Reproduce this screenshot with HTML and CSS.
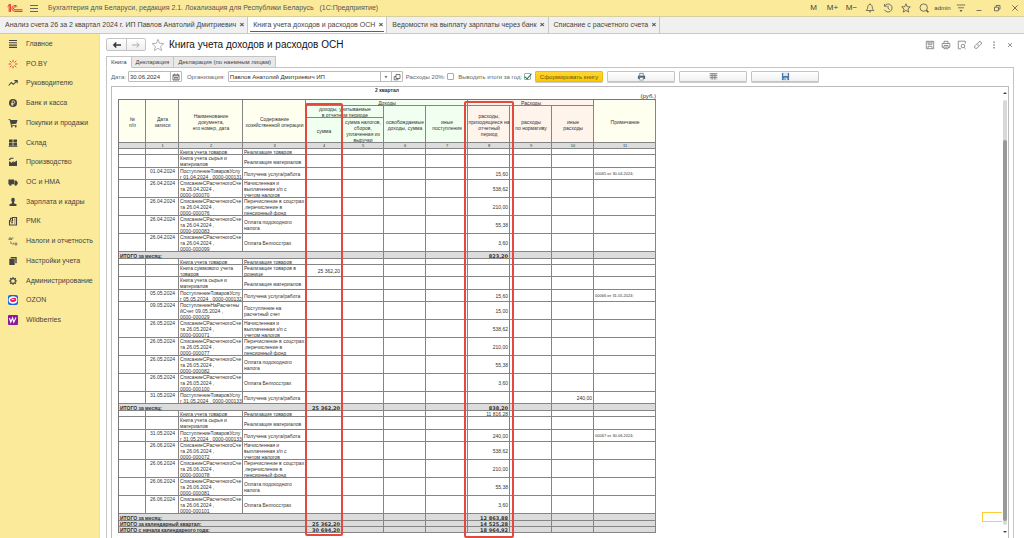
FILE: index.html
```html
<!DOCTYPE html>
<html lang="ru">
<head>
<meta charset="utf-8">
<meta name="viewport" content="width=device-width, initial-scale=1">
<title>Книга учета доходов и расходов ОСН</title>
<link rel="stylesheet" href="styles.css">
</head>
<body>
<header class="titlebar">
  <svg class="logo" viewBox="0 0 16 9" aria-label="1C"><g fill="none" stroke="#e0352b" stroke-width="1"><path d="M.5 2.8 2.2 1.2V8M3.6 8V.6L1.6.6"/><path d="M10.4 2.6A3 3 0 1 0 7.8 7.4H15.5"/><path d="M9.2 3.3A1.5 1.5 0 1 0 7.9 5.8H15.5"/></g></svg>
  <button class="burger" aria-label="Меню"><svg viewBox="0 0 8 8"><path d="M0 1.5h8M0 4.5h8M0 7.5h8" stroke="#666" fill="none"/></svg></button>
  <span class="app-name">Бухгалтерия для Беларуси, редакция 2.1. Локализация для Республики Беларусь &nbsp; (1С:Предприятие)</span>
  <div class="window-tools">
    <button class="word">M</button><button class="word">M+</button><button class="word">M−</button>
    <button aria-label="Уведомления"><svg viewBox="0 0 10 10"><path d="M1.2 7.5h7.6L7.5 5.8C7.3 3 6.8 1.5 5 1.5S2.7 3 2.5 5.8zM4 8.8h2M5 .5v1"/></svg></button>
    <button aria-label="История"><svg viewBox="0 0 10 10"><path d="M1.6 3A4 4 0 1 1 1.5 6.8M1.5 1v2.3h2.3M5 2.8V5.2L6.7 6.6"/></svg></button>
    <button aria-label="Избранное"><svg viewBox="0 0 10 10"><path d="m5 .8 1.2 2.9 3.1.2L6.9 6l.8 3.1L5 7.4 2.3 9.1 3.1 6 .7 3.9l3.1-.2z"/></svg></button>
    <button aria-label="Поиск"><svg viewBox="0 0 10 10"><circle cx="4.7" cy="4.6" r="3.7"/><path d="m7.4 7.3 2 2" stroke-width="1.5"/></svg></button>
    <button class="word user">admin</button>
    <button aria-label="Настройки"><svg viewBox="0 0 10 10"><path d="M.8 2h8.4M2 4.8h6"/><path d="M3.5 7h3L5 9z" fill="#555" stroke="none"/></svg></button>
    <button aria-label="Свернуть"><svg viewBox="0 0 10 10"><path d="M2.5 7.5h5"/></svg></button>
    <button aria-label="Восстановить"><svg viewBox="0 0 10 10"><path d="M2.5 4.2h4v3.6h-4zM4 4V2.5h4v3.6H6.8"/></svg></button>
    <button aria-label="Закрыть"><svg viewBox="0 0 10 10"><path d="m2.3 2.3 5.4 5.4M7.7 2.3 2.3 7.7"/></svg></button>
  </div>
</header>
<nav class="doc-tabs">
  <div class="doc-tab"><a href="#">Анализ счета 26 за 2 квартал 2024 г. ИП Павлов Анатолий Дмитриевич</a><button aria-label="Закрыть">×</button></div>
  <div class="doc-tab active"><a href="#">Книга учета доходов и расходов ОСН</a><button aria-label="Закрыть">×</button></div>
  <div class="doc-tab"><a href="#">Ведомости на выплату зарплаты через банк</a><button aria-label="Закрыть">×</button></div>
  <div class="doc-tab"><a href="#">Списание с расчетного счета</a><button aria-label="Закрыть">×</button></div>
</nav>
<div class="workspace">
  <nav class="sidebar">
    <ul>
      <li><a href="#"><svg viewBox="0 0 10 10"><path class="line" d="M1 1.5h8M1 3.8h8M1 6.1h8M1 8.4h8"/></svg>Главное</a></li>
      <li><a href="#"><svg viewBox="0 0 10 10"><g stroke="#e0483c" stroke-width="1" fill="none"><path d="M5 .8v2.4M5 7v2.4M.6 5h2.5M7 5h2.5M1.7 1.8l1.8 1.7M8.3 1.8 6.6 3.5M1.7 8.3l1.8-1.8M8.3 8.3 6.6 6.5"/></g></svg>PO.BY</a></li>
      <li><a href="#"><svg viewBox="0 0 10 10"><path class="line" d="m.7 7.5 2.6-3 2 1.8L9 2.8M6.3 2.6h2.9v2.7"/></svg>Руководителю</a></li>
      <li><a href="#"><svg viewBox="0 0 10 10"><circle cx="5" cy="5" r="4"/><path d="M4.2 8V2.9h1.3a1.2 1.2 0 0 1 0 2.6H3.1M3.1 6.7h2.5" fill="none" stroke="#fbea9a" stroke-width=".8"/></svg>Банк и касса</a></li>
      <li><a href="#"><svg viewBox="0 0 10 10"><path d="M.5 1h1.7l.4 1h6.9L8.4 5.8 3.5 6.2l.2.7h4.8v.8H3L1.6 1.8H.5z"/><circle cx="3.8" cy="8.6" r=".9"/><circle cx="7.7" cy="8.6" r=".9"/></svg>Покупки и продажи</a></li>
      <li><a href="#"><svg viewBox="0 0 10 10"><path d="M1 1.5h3.6v3H1zM5.4 1.5H9v3H5.4zM1 5.1h3.6v2.3H1zM5.4 5.1H9v2.3H5.4zM.6 7.8h8.8v.9H.6z"/></svg>Склад</a></li>
      <li><a href="#"><svg viewBox="0 0 10 10"><path d="M1 9V4.5h1.5L3 6l2.7-2v1.6L9 3.5V9z"/><path class="line" d="M1.5 3.2C1 1.5 3 2.2 3 1.3h2.5"/></svg>Производство</a></li>
      <li><a href="#"><svg viewBox="0 0 10 10"><path d="M.4 2.5H6v4.8H.4zM6.4 3.6h1.9l1.4 1.7v2H6.4z"/><circle cx="2.4" cy="7.5" r="1.2"/><circle cx="7.7" cy="7.5" r="1.2"/></svg>ОС и НМА</a></li>
      <li><a href="#"><svg viewBox="0 0 10 10"><ellipse cx="5" cy="3" rx="1.8" ry="2.2"/><path d="M1.5 9V7.3L4 6.2V5h2v1.2l2.5 1.1V9z"/></svg>Зарплата и кадры</a></li>
      <li><a href="#"><svg viewBox="0 0 10 10"><path class="line" d="M1.5 4v5h7V1.5h-4V5H1.5M3 6.800h2M6.300 3.200h1M6.300 5h1M6.300 7h1M2.500 4V2.200h2"/></svg>РМК</a></li>
      <li><a href="#"><svg viewBox="0 0 10 10"><path class="line thin" d="M1 4V2.800L2 1.300l1 1.500V4M1 3.200h2M3.700 4V2h1.800M5 9V7.200h1.500M7.200 9V7h1.600v2zM2.800 5.400v2h1.200"/></svg>Налоги и отчетность</a></li>
      <li><a href="#"><svg viewBox="0 0 10 10"><path d="M1.300 2.800h5.400V9H1.300zM2.700 1h6v6.200H7.300V2.200H2.700z"/></svg>Настройки учета</a></li>
      <li><a href="#"><svg viewBox="0 0 10 10"><circle cx="5" cy="5" r="2.400" fill="none" stroke="#444" stroke-width="1.100"/><path class="line" d="M5 .9v1.500M5 7.600v1.500M.9 5h1.500M7.600 5h1.500M2.100 2.100l1 1M6.900 6.900l1 1M7.900 2.100l-1 1M3.100 6.900l-1 1"/></svg>Администрирование</a></li>
      <li><a href="#"><svg viewBox="0 0 10 10"><rect width="10" height="10" rx="2" fill="#1565e8"/><ellipse cx="5" cy="5" rx="4.400" ry="3.700" fill="#fff"/><ellipse cx="5.200" cy="5" rx="3.200" ry="2" fill="#f21858" transform="rotate(-12 5 5)"/><ellipse cx="5" cy="4.500" rx="1.500" ry=".6" fill="#fff"/></svg>OZON</a></li>
      <li><a href="#"><svg viewBox="0 0 10 10"><rect width="10" height="10" rx="1" fill="#8b1b9c"/><path d="m1.500 3 1.300 4.200L4.600 3l1.200 4.200L8 2.600" fill="none" stroke="#fff" stroke-width="1.100"/></svg>Wildberries</a></li>
    </ul>
  </nav>
  <main class="page">
    <div class="page-head">
      <div class="history"><button aria-label="Назад"><svg viewBox="0 0 10 8"><path d="M9 4H2M4.3 1.5 1.8 4l2.5 2.5" fill="none" stroke="#333" stroke-width="1.4"/></svg></button><button aria-label="Вперед"><svg viewBox="0 0 10 8"><path d="M1 4h7M5.7 1.5 8.2 4 5.7 6.5" fill="none" stroke="#aaa"/></svg></button></div>
      <button class="star" aria-label="В избранное"><svg viewBox="0 0 14 14"><path d="m7 1.3 1.6 4 4.3.3-3.3 2.8 1 4.2L7 10.3l-3.6 2.3 1-4.2L1.1 5.6l4.3-.3z" fill="none" stroke="#aaa" stroke-width=".9"/></svg></button>
      <h1>Книга учета доходов и расходов ОСН</h1>
      <div class="page-tools">
        <button aria-label="Сохранить"><svg viewBox="0 0 10 10"><path d="M1.3 1.3h7.4v7.4H1.3zM3 1.3v3h4v-3M3 8.5V6.3h4v2.2M3.5 2.8h3"/></svg></button>
        <button aria-label="Печать"><svg viewBox="0 0 10 10"><path d="M3 3.5V1.3h4v2.2M3 7.3H1.2V3.5h7.6v3.8H7M3 5.5h4v3.2H3zM4 7.2h2"/></svg></button>
        <button aria-label="Предпросмотр"><svg viewBox="0 0 10 10"><path d="M4 8.8H1.3V1.2h7v2.3M8.5 8.8 7.2 7.6"/><circle cx="6" cy="6" r="1.8"/></svg></button>
        <button aria-label="Ссылка"><svg viewBox="0 0 10 10"><path d="M4.3 3.5 6 1.8c1.4-1 3.4.8 2.2 2.3L6.5 5.8C5.8 6.3 5 6.2 4.4 5.6M5.7 6.5 4 8.2C2.6 9.2.6 7.4 1.8 5.9L3.5 4.2C4.2 3.7 5 3.8 5.6 4.4"/></svg></button>
        <button aria-label="Еще"><svg viewBox="0 0 10 10"><path d="M5 1.5v1.5M5 4.3v1.5M5 7.1v1.5" stroke-width="1.3"/></svg></button>
        <button aria-label="Закрыть"><svg viewBox="0 0 10 10"><path d="m3 3 4 4M7 3 3 7"/></svg></button>
      </div>
    </div>
    <div class="form-tabs"><button class="active">Книга</button><button>Декларация</button><button>Декларация (по наемным лицам)</button></div>
    <section class="panel">
      <div class="toolbar">
        <label for="date">Дата:</label>
        <div class="field date"><input id="date" type="text" value="30.06.2024"><button aria-label="Календарь"><svg viewBox="0 0 8 8"><path d="M1 1.8h6v5.2H1zM1 2.8h6M2.5.6v1M5.5.6v1M2 4.5h4M2 6h4" fill="none" stroke="#555" stroke-width=".8"/></svg></button></div>
        <label for="org">Организация:</label>
        <div class="field org"><input id="org" type="text" value="Павлов Анатолий Дмитриевич ИП"><button aria-label="Выбрать"><svg viewBox="0 0 8 8"><path d="M2.5 3.3h3L4 5z" fill="#444"/></svg></button><button aria-label="Открыть"><svg viewBox="0 0 8 8"><path d="M3 1.5h4v4H3zM5 5.5v1.3H1.2V3.5H3" fill="none" stroke="#555" stroke-width=".8"/></svg></button></div>
        <label class="check">Расходы 20%:<input type="checkbox"></label>
        <label class="check">Выводить итоги за год:<input type="checkbox" checked></label>
        <div class="commands">
          <button class="primary">Сформировать книгу</button>
          <button aria-label="Печать"><svg viewBox="0 0 10 10"><path d="M3 4V1.5h4V4" fill="#fff" stroke="#4f6272" stroke-width=".8"/><path d="M1 4h8v3.8H1z" fill="#52687b"/><path d="M3 6h4v3H3z" fill="#fff" stroke="#4f6272" stroke-width=".6"/></svg></button>
          <button aria-label="Таблица"><svg viewBox="0 0 10 10"><path d="M.8 1.5h8.400v7H.8z" fill="#ddd"/><path d="M.8 1.800h8.400M.8 4h8.400M.8 6.200h8.400M3.500 1.500v7M6.500 1.500v7" fill="none" stroke="#777" stroke-width=".8"/></svg></button>
          <button aria-label="Сохранить"><svg viewBox="0 0 10 10"><path d="M1 1h8v8H1z" fill="#4779aa"/><path d="M2.500 1h5v3.500h-5zM3 6.300h4V9H3z" fill="#dbe8f3"/><path d="M4 7h1v2H4z" fill="#335f8c"/></svg></button>
        </div>
      </div>
      <div class="sheet">
        <div class="report">
          <div class="quarter">2 квартал</div>
          <div class="unit">(руб.)</div>
          <div class="book">
          <table>
            <colgroup><col class="w27"><col class="w33"><col class="w64"><col class="w63"><col class="w36"><col class="w42"><col class="w42"><col class="w42"><col class="w42"><col class="w42"><col class="w42"><col class="w62"></colgroup>
            <thead>
              <tr class="h6"><th rowspan="3">№<br>п/п</th><th rowspan="3">Дата<br>записи</th><th rowspan="3">Наименование<br>документа,<br>его номер, дата</th><th rowspan="3">Содержание<br>хозяйственной операции</th><th colspan="4" class="income">Доходы</th><th colspan="3" class="expense">Расходы</th><th rowspan="3">Примечание</th></tr>
              <tr class="h12"><th colspan="2" class="income">доходы, учитываемые<br>в отчетном периоде</th><th rowspan="2" class="income">освобождаемые<br>доходы, сумма</th><th rowspan="2" class="income">иные<br>поступления</th><th rowspan="2" class="expense">расходы,<br>приходящиеся на<br>отчетный<br>период</th><th rowspan="2" class="expense">расходы<br>по нормативу</th><th rowspan="2" class="expense">иные<br>расходы</th></tr>
              <tr class="h25"><th class="income">сумма</th><th class="income">сумма налогов,<br>сборов,<br>уплаченная из<br>выручки</th></tr>
              <tr class="h6 index"><th></th><th>1</th><th>2</th><th>3</th><th>4</th><th>5</th><th>6</th><th>7</th><th>8</th><th>9</th><th>10</th><th>11</th></tr>
            </thead>
            <tbody>
              <tr class="h6"><td></td><td></td><td>Книга учета товаров</td><td>Реализация товаров</td><td></td><td></td><td></td><td></td><td></td><td></td><td></td><td></td></tr>
              <tr class="h13"><td></td><td></td><td>Книга учета сырья и<br>материалов</td><td>Реализация материалов</td><td></td><td></td><td></td><td></td><td></td><td></td><td></td><td></td></tr>
              <tr class="h12"><td></td><td>01.04.2024</td><td>ПоступлениеТоваровУслу<br>г 01.04.2024 , 0000-000131</td><td>Получена услуга/работа</td><td></td><td></td><td></td><td></td><td>15,60</td><td></td><td></td><td>00065 от 30.04.2024;</td></tr>
              <tr class="h18"><td></td><td>26.04.2024</td><td>СписаниеСРасчетногоСче<br>та 26.04.2024 ,<br>0000-000070</td><td>Начисленная и<br>выплаченная з/п с<br>учетом налогов</td><td></td><td></td><td></td><td></td><td>538,62</td><td></td><td></td><td></td></tr>
              <tr class="h18"><td></td><td>26.04.2024</td><td>СписаниеСРасчетногоСче<br>та 26.04.2024 ,<br>0000-000076</td><td>Перечисление в соцстрах<br>,перечисление в<br>пенсионный фонд</td><td></td><td></td><td></td><td></td><td>210,00</td><td></td><td></td><td></td></tr>
              <tr class="h18"><td></td><td>26.04.2024</td><td>СписаниеСРасчетногоСче<br>та 26.04.2024 ,<br>0000-000083</td><td>Оплата подоходного<br>налога</td><td></td><td></td><td></td><td></td><td>55,38</td><td></td><td></td><td></td></tr>
              <tr class="h18"><td></td><td>26.04.2024</td><td>СписаниеСРасчетногоСче<br>та 26.04.2024 ,<br>0000-000099</td><td>Оплата Белгосстрах</td><td></td><td></td><td></td><td></td><td>3,60</td><td></td><td></td><td></td></tr>
              <tr class="h7 total"><th colspan="4">ИТОГО за месяц:</th><td></td><td></td><td></td><td></td><td>823,20</td><td></td><td></td><td></td></tr>
              <tr class="h6"><td></td><td></td><td>Книга учета товаров</td><td>Реализация товаров</td><td></td><td></td><td></td><td></td><td></td><td></td><td></td><td></td></tr>
              <tr class="h12"><td></td><td></td><td>Книга суммового учета<br>товаров</td><td>Реализация товаров в<br>рознице</td><td>25 362,20</td><td></td><td></td><td></td><td></td><td></td><td></td><td></td></tr>
              <tr class="h13"><td></td><td></td><td>Книга учета сырья и<br>материалов</td><td>Реализация материалов</td><td></td><td></td><td></td><td></td><td></td><td></td><td></td><td></td></tr>
              <tr class="h12"><td></td><td>05.05.2024</td><td>ПоступлениеТоваровУслу<br>г 05.05.2024 , 0000-000132</td><td>Получена услуга/работа</td><td></td><td></td><td></td><td></td><td>15,60</td><td></td><td></td><td>00066 от 31.05.2024;</td></tr>
              <tr class="h18"><td></td><td>09.05.2024</td><td>ПоступлениеНаРасчетны<br>йСчет 09.05.2024 ,<br>0000-000029</td><td>Поступление на<br>расчетный счет</td><td></td><td></td><td></td><td></td><td>15,00</td><td></td><td></td><td></td></tr>
              <tr class="h18"><td></td><td>26.05.2024</td><td>СписаниеСРасчетногоСче<br>та 26.05.2024 ,<br>0000-000071</td><td>Начисленная и<br>выплаченная з/п с<br>учетом налогов</td><td></td><td></td><td></td><td></td><td>538,62</td><td></td><td></td><td></td></tr>
              <tr class="h18"><td></td><td>26.05.2024</td><td>СписаниеСРасчетногоСче<br>та 26.05.2024 ,<br>0000-000077</td><td>Перечисление в соцстрах<br>,перечисление в<br>пенсионный фонд</td><td></td><td></td><td></td><td></td><td>210,00</td><td></td><td></td><td></td></tr>
              <tr class="h18"><td></td><td>26.05.2024</td><td>СписаниеСРасчетногоСче<br>та 26.05.2024 ,<br>0000-000082</td><td>Оплата подоходного<br>налога</td><td></td><td></td><td></td><td></td><td>55,38</td><td></td><td></td><td></td></tr>
              <tr class="h18"><td></td><td>26.05.2024</td><td>СписаниеСРасчетногоСче<br>та 26.05.2024 ,<br>0000-000100</td><td>Оплата Белгосстрах</td><td></td><td></td><td></td><td></td><td>3,60</td><td></td><td></td><td></td></tr>
              <tr class="h12"><td></td><td>31.05.2024</td><td>ПоступлениеТоваровУслу<br>г 31.05.2024 , 0000-000133</td><td>Получена услуга/работа</td><td></td><td></td><td></td><td></td><td></td><td></td><td>240,00</td><td></td></tr>
              <tr class="h7 total"><th colspan="4">ИТОГО за месяц:</th><td>25 362,20</td><td></td><td></td><td></td><td>838,20</td><td></td><td></td><td></td></tr>
              <tr class="h6"><td></td><td></td><td>Книга учета товаров</td><td>Реализация товаров</td><td></td><td></td><td></td><td></td><td>11 816,28</td><td></td><td></td><td></td></tr>
              <tr class="h13"><td></td><td></td><td>Книга учета сырья и<br>материалов</td><td>Реализация материалов</td><td></td><td></td><td></td><td></td><td></td><td></td><td></td><td></td></tr>
              <tr class="h12"><td></td><td>31.05.2024</td><td>ПоступлениеТоваровУслу<br>г 31.05.2024 , 0000-000133</td><td>Получена услуга/работа</td><td></td><td></td><td></td><td></td><td>240,00</td><td></td><td></td><td>00067 от 30.06.2024;</td></tr>
              <tr class="h18"><td></td><td>26.06.2024</td><td>СписаниеСРасчетногоСче<br>та 26.06.2024 ,<br>0000-000072</td><td>Начисленная и<br>выплаченная з/п с<br>учетом налогов</td><td></td><td></td><td></td><td></td><td>538,62</td><td></td><td></td><td></td></tr>
              <tr class="h18"><td></td><td>26.06.2024</td><td>СписаниеСРасчетногоСче<br>та 26.06.2024 ,<br>0000-000078</td><td>Перечисление в соцстрах<br>,перечисление в<br>пенсионный фонд</td><td></td><td></td><td></td><td></td><td>210,00</td><td></td><td></td><td></td></tr>
              <tr class="h18"><td></td><td>26.06.2024</td><td>СписаниеСРасчетногоСче<br>та 26.06.2024 ,<br>0000-000081</td><td>Оплата подоходного<br>налога</td><td></td><td></td><td></td><td></td><td>55,38</td><td></td><td></td><td></td></tr>
              <tr class="h18"><td></td><td>26.06.2024</td><td>СписаниеСРасчетногоСче<br>та 26.06.2024 ,<br>0000-000101</td><td>Оплата Белгосстрах</td><td></td><td></td><td></td><td></td><td>3,60</td><td></td><td></td><td></td></tr>
              <tr class="h7 total"><th colspan="4">ИТОГО за месяц:</th><td></td><td></td><td></td><td></td><td>12 863,88</td><td></td><td></td><td></td></tr>
              <tr class="h6 total"><th colspan="4">ИТОГО за календарный квартал:</th><td>25 362,20</td><td></td><td></td><td></td><td>14 525,28</td><td></td><td></td><td></td></tr>
              <tr class="h6 total"><th colspan="4">ИТОГО с начала календарного года:</th><td>30 694,20</td><td></td><td></td><td></td><td>18 964,92</td><td></td><td></td><td></td></tr>
            </tbody>
          </table>
          <div class="mark mark-income"></div>
          <div class="mark mark-expense"></div>
          </div>
        </div>
        <div class="cell-cursor"></div>
        <div class="scrollbar"><button aria-label="Вверх"><svg viewBox="0 0 4 4"><path d="M0 3h4L2 1z"/></svg></button><div class="track"><div class="thumb"></div></div><button aria-label="Вниз"><svg viewBox="0 0 4 4"><path d="M0 1h4L2 3z"/></svg></button></div>
      </div>
    </section>
  </main>
</div>
</body>
</html>
```
FILE: styles.css
```css
* { box-sizing: border-box; }
html, body { height: 100%; }
body {
  margin: 0;
  display: flex;
  flex-direction: column;
  overflow: hidden;
  background: #fff;
  color: #444;
  font: 7px/8px "Liberation Sans", Arial, sans-serif;
}
button { margin: 0; padding: 0; border: 0; background: none; font: inherit; color: inherit; display: flex; align-items: center; justify-content: center; }
input { font: inherit; color: inherit; margin: 0; }
a { color: inherit; text-decoration: none; }
svg { display: block; flex: none; }

.titlebar { display: flex; align-items: center; flex: none; height: 17px; padding-left: 7px; background: #fbea9a; border-bottom: 1px solid #d8cfa0; }
.logo { width: 16px; height: 9px; }
.burger { margin: 0 10px 0 7px; }
.burger svg { width: 8px; height: 8px; }
.app-name { color: #555; white-space: nowrap; }
.window-tools { display: flex; margin-left: auto; }
.window-tools button { width: 18px; height: 16px; }
.window-tools .word { width: 19px; font-size: 8px; }
.window-tools .user { font-size: 6px; }
.window-tools svg, .page-tools svg { width: 10px; height: 10px; fill: none; stroke: #555; stroke-width: .8; }
.page-tools svg { stroke: #777; }

.doc-tabs { display: flex; flex: none; height: 17px; background: #f0f0f0; border-bottom: 1px solid #c8c8c8; }
.doc-tab { display: flex; align-items: center; gap: 3px; padding: 0 3px 0 5px; border-right: 1px solid #c8c8c8; white-space: nowrap; }
.doc-tab button { width: 5px; font-size: 8px; font-weight: bold; }
.doc-tab.active { background: linear-gradient(#009646, #009646) center 14px / calc(100% - 4px) 1px no-repeat #fff; }

.workspace { display: flex; flex: 1; min-height: 0; }
.sidebar { flex: none; width: 100px; background: #fbea9a; border-right: 1px solid #ddd; }
.sidebar ul { display: grid; grid-auto-rows: 1fr; height: 296px; margin: 0; padding: 0; list-style: none; }
.sidebar a { display: flex; align-items: center; gap: 8px; height: 100%; padding-left: 8px; white-space: nowrap; }
.sidebar svg { width: 10px; height: 10px; fill: #444; }
.sidebar .line { fill: none; stroke: #444; stroke-width: 1.1; }
.sidebar .thin { stroke-width: .6; }

.page { display: flex; flex-direction: column; flex: 1; min-width: 0; padding: 4px 10px 0 6px; }
.page-head { display: flex; align-items: center; flex: none; height: 13px; }
.history { display: flex; border: 1px solid #c4c4c4; border-radius: 2px; height: 13px; background: linear-gradient(#fff, #eee); }
.history button { width: 19px; }
.history button + button { border-left: 1px solid #c4c4c4; }
.history svg { width: 10px; height: 8px; }
.star { margin: 0 4px 0 5px; }
.star svg { width: 14px; height: 14px; }
h1 { margin: 0; font-size: 10px; line-height: 12px; font-weight: normal; color: #111; white-space: nowrap; }
.page-tools { display: flex; margin-left: auto; margin-right: -4px; }
.page-tools button { width: 16px; }

.form-tabs { display: flex; flex: none; margin-top: 5px; height: 12px; font-size: 6px; position: relative; z-index: 1; }
.form-tabs button { padding: 0 4px; background: #e9e9e9; border: 1px solid #c4c4c4; border-left-width: 0; }
.form-tabs .active { background: #fff; border-left-width: 1px; border-bottom-color: #fff; }

.panel { display: flex; flex-direction: column; flex: 1; min-height: 0; margin-top: -1px; padding: 3px 4px 0; border: 1px solid #c4c4c4; border-bottom: 0; }
.toolbar { display: flex; align-items: center; flex: none; height: 11px; font-size: 6px; color: #666; white-space: nowrap; }
.field { display: flex; height: 11px; border: 1px solid #bbb; border-radius: 1px; color: #333; }
.field input { flex: 1; min-width: 0; border: 0; padding: 0 1px; background: none; outline: 0; }
.field button { width: 11px; border-left: 1px solid #bbb; }
.field svg { width: 8px; height: 8px; }
.date { width: 54px; margin: 0 5px 0 2px; }
.org { width: 175px; margin: 0 3px; }
.check { display: flex; align-items: center; gap: 2px; margin-right: 4px; }
.check input { appearance: none; width: 7px; height: 7px; border: 1px solid #aaa; border-radius: 1px; background: #fff; position: relative; }
.check input:checked::after { content: ""; position: absolute; left: 1px; top: -2px; width: 3px; height: 6px; border: solid #00854a; border-width: 0 1px 1px 0; transform: rotate(40deg); }
.commands { display: flex; gap: 4px; }
.commands button { width: 68px; height: 11px; border: 1px solid #c4c4c4; border-radius: 1px; background: linear-gradient(#fff, #f0f0f0); box-shadow: 0 1px 0 #ccc; }
.commands .primary { background: linear-gradient(#ffd633, #fcc800); border-color: #e8bc14; color: #6b5a10; }
.commands svg { width: 9px; height: 9px; }

.sheet { position: relative; display: flex; justify-content: space-between; flex: 1; min-height: 0; margin-top: 4px; border: 1px solid #bbb; border-bottom: 0; overflow: hidden; }
.report { width: 538px; margin-left: 6px; font: 5px/6px "Liberation Sans", Arial, sans-serif; color: #333; }
.quarter { height: 6px; text-align: center; font-weight: bold; }
.unit { height: 6px; text-align: right; font-size: 6px; }
.book { position: relative; }
table { width: 538px; table-layout: fixed; border-collapse: separate; border-spacing: 0; border-top: 1px solid #777; border-left: 1px solid #777; white-space: nowrap; }
.w27 { width: 27px; }
.w33 { width: 33px; }
.w36 { width: 36px; }
.w42 { width: 42px; }
.w62 { width: 62px; }
.w63 { width: 63px; }
.w64 { width: 64px; }
.h6 { height: 6px; }
.h7 { height: 7px; }
.h12 { height: 12px; }
.h13 { height: 13px; }
.h18 { height: 18px; }
.h25 { height: 25px; }
th, td { padding: 0 2px 0 1px; overflow: hidden; box-shadow: inset -1px -1px 0 #858585; vertical-align: middle; text-align: right; font-weight: normal; }
thead th { padding: 0; text-align: center; background: #fffff0; }
thead .income { background: #f0fff0; }
thead .expense { background: #fff4ec; }
.index th, .total th, .total td { background: #dcdcdc; }
.index { font-size: 4px; }
td:nth-child(2) { padding-right: 4px; vertical-align: top; }
tr:not(.total) td:nth-child(3) { vertical-align: top; text-align: left; }
tr:not(.total) td:nth-child(4) { text-align: left; }
td:nth-child(12) { text-align: left; font-size: 4px; }
.total th { text-align: left; font-weight: bold; }
.total td { font: bold 5px/6px "DejaVu Sans", sans-serif; vertical-align: middle; text-align: right; padding-right: 2px; }

.mark { position: absolute; border: 2px solid #e4493f; border-radius: 2px; }
.mark-income { left: 187px; width: 38px; top: 4px; bottom: -3px; }
.mark-expense { left: 346px; width: 50px; top: 2px; bottom: -5px; }
.cell-cursor { position: absolute; right: 6px; bottom: 16px; width: 20px; height: 10px; border: 1px solid #fc3; border-right: 0; }
.scrollbar { display: flex; flex-direction: column; align-items: center; width: 4px; margin: 4px 1px 4px 0; gap: 5px; }
.scrollbar svg { width: 4px; height: 4px; fill: #444; }
.track { flex: 1; width: 4px; padding: 40px 0 4px; background: #d8d8d8; border-radius: 2px; }
.thumb { height: 100%; background: #989a99; border-radius: 2px; }
```
